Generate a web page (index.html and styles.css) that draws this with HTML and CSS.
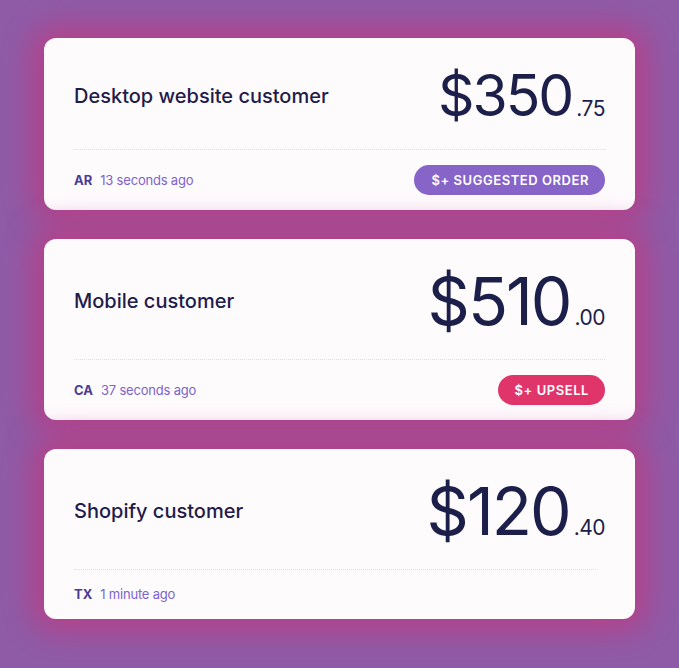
FILE: index.html
```html
<!DOCTYPE html>
<html>
<head>
<meta charset="utf-8">
<link rel="stylesheet" href="styles.css">
</head>
<body>
<main class="feed">
  <section class="card">
    <div class="top">
      <h2 class="title">Desktop website customer</h2>
      <div class="price price-sm"><span class="whole">$350</span><span class="cents">.75</span></div>
    </div>
    <div class="divider"></div>
    <div class="foot">
      <div class="meta"><span class="state">AR</span><span class="time">13 seconds ago</span></div>
      <span class="badge badge-purple">$+ Suggested order</span>
    </div>
  </section>
  <section class="card">
    <div class="top">
      <h2 class="title">Mobile customer</h2>
      <div class="price"><span class="whole">$510</span><span class="cents">.00</span></div>
    </div>
    <div class="divider"></div>
    <div class="foot">
      <div class="meta"><span class="state">CA</span><span class="time">37 seconds ago</span></div>
      <span class="badge badge-red">$+ Upsell</span>
    </div>
  </section>
  <section class="card">
    <div class="top">
      <h2 class="title">Shopify customer</h2>
      <div class="price"><span class="whole">$120</span><span class="cents">.40</span></div>
    </div>
    <div class="divider divider-short"></div>
    <div class="foot foot-plain">
      <div class="meta"><span class="state">TX</span><span class="time">1 minute ago</span></div>
    </div>
  </section>
</main>
</body>
</html>
```

FILE: styles.css
```css
html, body {
  margin: 0;
  padding: 0;
}
body {
  background: #8f5ba7;
  font-family: Inter, "Noto Sans", sans-serif;
  width: 679px;
  height: 668px;
  overflow: hidden;
}
.feed {
  display: flex;
  flex-direction: column;
  gap: 29px;
  padding: 38px 0 0 44px;
  width: 591px;
}
.card {
  background: #fefbfd;
  border-radius: 12px;
  padding: 29px 30px 15px;
  box-shadow: 0 0 28px 13px rgba(184, 62, 134, 0.85);
}
.top {
  display: flex;
  align-items: center;
  justify-content: space-between;
}
.title {
  margin: 0;
  font-size: 20px;
  font-weight: 450;
  color: #1f1c4b;
  letter-spacing: 0;
}
.price {
  display: flex;
  align-items: baseline;
  color: #1c1f4a;
  line-height: 1;
}
.whole {
  font-size: 66px;
  font-weight: 400;
  letter-spacing: -2px;
}
.price-sm .whole {
  font-size: 57px;
}
.cents {
  font-size: 21px;
  margin-left: 4px;
  letter-spacing: -0.5px;
}
.divider {
  margin-top: 25px;
  border-top: 1px dotted #e2dde3;
}
.divider-short {
  margin-right: 9px;
}
.foot {
  display: flex;
  align-items: center;
  justify-content: space-between;
  margin-top: 15px;
  min-height: 30px;
}
.foot-plain {
  min-height: 20px;
  margin-top: 14px;
}
.meta {
  display: flex;
  align-items: baseline;
  gap: 8px;
  font-size: 13px;
}
.state {
  font-weight: 700;
  color: #4a3b95;
}
.time {
  color: #7c64cc;
  letter-spacing: -0.2px;
}
.badge {
  display: inline-flex;
  align-items: center;
  height: 30px;
  padding: 0 16px 0 17px;
  border-radius: 15px;
  color: #fff;
  font-size: 13px;
  font-weight: 600;
  letter-spacing: 0.55px;
  text-transform: uppercase;
}
.badge-purple {
  background: #8764c8;
}
.badge-red {
  background: #e0356a;
}
```
